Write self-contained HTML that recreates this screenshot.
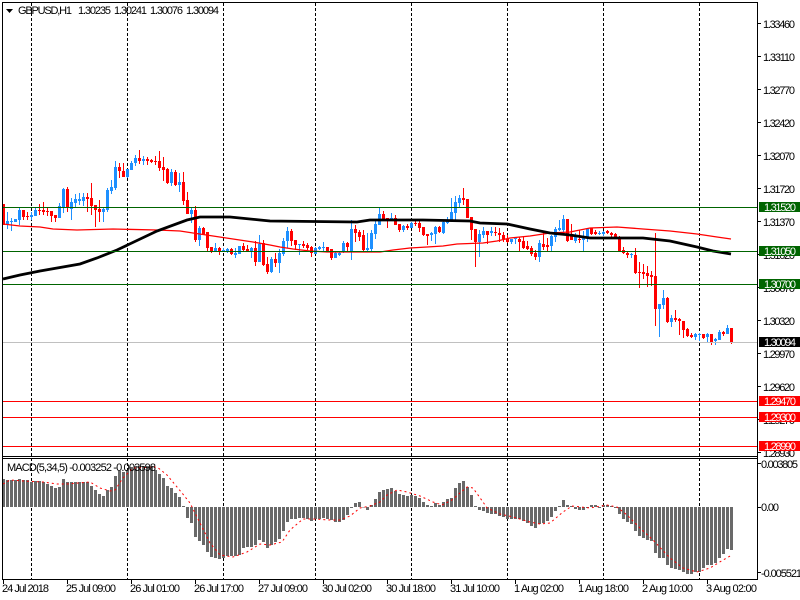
<!DOCTYPE html>
<html>
<head>
<meta charset="utf-8">
<style>
html,body{margin:0;padding:0;background:#fff;width:800px;height:600px;overflow:hidden}
svg{display:block}
text{font-family:"Liberation Sans",sans-serif;font-size:11px;fill:#000}
.c{shape-rendering:crispEdges;fill:none}
</style>
</head>
<body>
<svg width="800" height="600" viewBox="0 0 800 600" xmlns="http://www.w3.org/2000/svg">
<rect width="800" height="600" fill="#fff"/>

<!-- vertical grid -->
<path class="c" stroke="#000" stroke-dasharray="3 2" d="M31.5 3V579M127.5 3V579M223.5 3V579M315.5 3V579M411.5 3V579M507.5 3V579M603.5 3V579M699.5 3V579"/>

<!-- blue wicks -->
<path class="c" stroke="#1e90ff" d="M7.5 212V229M11.5 218V231M15.5 219V222M19.5 208V225M31.5 212V220M35.5 208V216M59.5 203V218M63.5 188V213M71.5 198V220M75.5 194V208M79.5 193V205M83.5 193V206M103.5 208V222M107.5 188V212M111.5 180V194M115.5 161V190M127.5 169V178M131.5 161V170M135.5 155V166M143.5 156V165M171.5 169V186M179.5 173V192M191.5 208V223M199.5 226V246M215.5 243V252M223.5 248V252M227.5 248V253M235.5 248V258M239.5 246V254M251.5 247V258M259.5 235V262M271.5 257V273M279.5 249V273M283.5 238V256M287.5 227V248M299.5 244V255M315.5 247V254M319.5 246V250M323.5 242V251M335.5 252V258M339.5 251V256M343.5 241V253M351.5 220V260M367.5 233V251M371.5 230V251M375.5 220V239M379.5 208V225M391.5 213V221M403.5 225V232M411.5 222V228M431.5 232V241M435.5 226V244M443.5 220V234M447.5 217V224M451.5 198V222M455.5 196V221M459.5 195V207M479.5 230V257M483.5 227V238M491.5 227V236M511.5 239V244M515.5 238V244M539.5 240V262M551.5 235V251M555.5 227V242M559.5 220V231M563.5 215V232M575.5 233V243M583.5 231V252M587.5 228V242M599.5 231V235M603.5 231V236M631.5 253V258M659.5 304V337M663.5 290V309M671.5 315V327M695.5 333V340M699.5 333V341M707.5 333V342M715.5 338V345M719.5 330V340M727.5 325V334"/>
<!-- blue bodies -->
<path class="c" stroke="#1e90ff" stroke-width="3" d="M7.5 221V225M11.5 221V222M15.5 219V222M19.5 210V220M31.5 215V217M35.5 210V216M59.5 206V218M63.5 189V208M71.5 202V209M75.5 199V203M79.5 199V201M83.5 197V201M103.5 209V212M107.5 190V210M111.5 187V191M115.5 167V188M127.5 169V177M131.5 163V170M135.5 158V163M143.5 159V161M171.5 172V183M179.5 182V185M191.5 210V214M199.5 228V240M215.5 248V251M223.5 250V251M227.5 249V251M235.5 253V255M239.5 246V254M251.5 248V251M259.5 244V262M271.5 259V272M279.5 253V263M283.5 241V254M287.5 231V241M299.5 244V245M315.5 248V254M319.5 247V249M323.5 247V248M335.5 253V258M339.5 253V255M343.5 243V252M351.5 229V251M367.5 248V250M371.5 233V249M375.5 224V234M379.5 214V225M391.5 218V220M403.5 226V230M411.5 223V228M431.5 233V235M435.5 227V234M443.5 222V233M447.5 221V223M451.5 212V220M455.5 202V213M459.5 198V203M479.5 234V242M483.5 231V235M491.5 231V233M511.5 239V242M515.5 238V239M539.5 243V257M551.5 236V246M555.5 229V237M559.5 228V230M563.5 219V230M575.5 237V241M583.5 236V240M587.5 229V237M599.5 233V234M603.5 232V234M631.5 254V255M659.5 304V309M663.5 298V305M671.5 318V322M695.5 334V337M699.5 334V335M707.5 334V337M715.5 339V341M719.5 332V340M727.5 328V334"/>
<!-- red wicks -->
<path class="c" stroke="#ff0000" d="M3.5 204V225M23.5 210V220M27.5 212V220M39.5 204V215M43.5 202V215M47.5 208V216M51.5 211V222M55.5 215V222M67.5 187V212M87.5 193V212M91.5 183V215M95.5 205V227M99.5 200V222M119.5 163V178M123.5 163V177M139.5 150V164M147.5 157V165M151.5 159V163M155.5 156V165M159.5 151V171M163.5 157V181M167.5 168V184M175.5 170V186M183.5 172V205M187.5 192V214M195.5 206V242M203.5 227V235M207.5 232V251M211.5 247V253M219.5 247V255M231.5 248V255M243.5 243V252M247.5 245V251M255.5 241V266M263.5 240V266M267.5 257V274M275.5 253V267M291.5 229V246M295.5 240V250M303.5 241V248M307.5 243V250M311.5 246V257M327.5 247V252M331.5 249V260M347.5 242V251M355.5 225V242M359.5 230V241M363.5 230V251M383.5 211V220M387.5 218V228M395.5 215V225M399.5 224V232M407.5 224V230M415.5 221V226M419.5 220V232M423.5 227V236M427.5 234V245M439.5 226V233M463.5 188V205M467.5 199V218M471.5 217V240M475.5 229V267M487.5 231V244M495.5 227V236M499.5 228V242M503.5 232V242M507.5 235V243M519.5 237V251M523.5 237V249M527.5 241V250M531.5 246V256M535.5 250V260M543.5 232V250M547.5 238V251M567.5 219V242M571.5 224V240M579.5 230V243M591.5 228V235M595.5 230V235M607.5 230V234M611.5 232V239M615.5 233V238M619.5 236V251M623.5 247V254M627.5 251V258M635.5 248V274M639.5 262V288M643.5 264V279M647.5 266V287M651.5 271V286M655.5 233V326M667.5 297V323M675.5 310V322M679.5 318V335M683.5 321V338M687.5 328V337M691.5 333V338M703.5 334V339M711.5 334V345M723.5 331V336M731.5 328V344"/>
<!-- red bodies -->
<path class="c" stroke="#ff0000" stroke-width="3" d="M3.5 204V225M23.5 210V217M27.5 216V217M39.5 210V211M43.5 210V212M47.5 211V212M51.5 211V216M55.5 215V218M67.5 189V208M87.5 197V199M91.5 198V206M95.5 205V210M99.5 209V212M119.5 167V171M123.5 171V177M139.5 158V161M147.5 159V161M151.5 160V162M155.5 161V162M159.5 161V168M163.5 167V170M167.5 169V183M175.5 172V185M183.5 182V201M187.5 200V214M195.5 210V240M203.5 228V235M207.5 232V248M211.5 247V251M219.5 248V251M231.5 249V254M243.5 246V250M247.5 249V251M255.5 248V262M263.5 243V265M267.5 264V272M275.5 259V263M291.5 231V241M295.5 240V245M303.5 244V246M307.5 245V248M311.5 247V253M327.5 247V252M331.5 249V258M347.5 243V247M355.5 229V233M359.5 232V237M363.5 235V250M383.5 214V219M387.5 218V220M395.5 218V225M399.5 224V230M407.5 226V228M415.5 223V224M419.5 223V228M423.5 227V235M427.5 234V236M439.5 227V232M463.5 198V200M467.5 199V218M471.5 217V230M475.5 229V242M487.5 231V235M495.5 232V233M499.5 233V235M503.5 235V239M507.5 239V242M519.5 239V242M523.5 241V248M527.5 246V249M531.5 248V254M535.5 253V257M543.5 244V247M547.5 245V247M567.5 219V241M571.5 234V240M579.5 239V240M591.5 228V234M595.5 232V234M607.5 231V233M611.5 233V235M615.5 234V237M619.5 237V251M623.5 250V253M627.5 253V255M635.5 255V273M639.5 272V273M643.5 272V274M647.5 273V276M651.5 275V277M655.5 276V309M667.5 298V322M675.5 318V320M679.5 319V321M683.5 321V330M687.5 329V336M691.5 335V337M703.5 334V338M711.5 334V342M723.5 332V334M731.5 328V342"/>

<!-- moving averages -->
<polyline fill="none" stroke="#ff0000" stroke-width="1.3" points="3,224 20,226 40,227 53,229 77,230 113,229 157,230 180,231 193,233 213,236 233,239 253,242 270,245 280,247 293,249 310,251 327,252 380,252 393,250 410,248 427,247 443,246 457,244 483,243 497,241 510,238 530,236 550,233 570,232 590,228 617,227 643,229 670,231 697,234 717,237 731,239"/>
<polyline fill="none" stroke="#000" stroke-width="2.8" points="3,279 20,275 40,271 80,264 97,258 117,250 157,231 187,220 200,217 230,217 260,220 270,221 357,222 370,220 423,220 470,221 480,223 507,224 530,229 550,233 570,235 590,238 643,238 670,241 697,247 713,251 731,254"/>

<!-- horizontal objects -->
<g class="c">
<path stroke="#006400" d="M3 207.5H757M3 251.5H757M3 284.5H757"/>
<path stroke="#c0c0c0" d="M3 342.5H757"/>
<path stroke="#ff0000" d="M3 401.5H757M3 417.5H757M3 446.5H757"/>
</g>

<!-- MACD histogram -->
<path class="c" stroke="#696969" stroke-width="3" d="M3.5 507V479M7.5 507V480M11.5 507V480M15.5 507V480M19.5 507V479M23.5 507V480M27.5 507V480M31.5 507V482M35.5 507V481M39.5 507V481M43.5 507V482M47.5 507V484M51.5 507V486M55.5 507V488M59.5 507V487M63.5 507V479M67.5 507V482M71.5 507V482M75.5 507V482M79.5 507V482M83.5 507V482M87.5 507V482M91.5 507V486M95.5 507V490M99.5 507V494M103.5 507V496M107.5 507V490M111.5 507V487M115.5 507V476M119.5 507V471M123.5 507V472M127.5 507V470M131.5 507V467M135.5 507V466M139.5 507V466M143.5 507V466M147.5 507V466M151.5 507V466M155.5 507V470M159.5 507V474M163.5 507V478M167.5 507V486M171.5 507V488M175.5 507V493M179.5 507V497M183.5 507V506M187.5 507V518M191.5 507V523M195.5 507V537M199.5 507V541M203.5 507V545M207.5 507V552M211.5 507V557M215.5 507V558M219.5 507V559M223.5 507V558M227.5 507V556M231.5 507V556M235.5 507V556M239.5 507V555M243.5 507V548M247.5 507V547M251.5 507V547M255.5 507V545M259.5 507V540M263.5 507V542M267.5 507V548M271.5 507V545M275.5 507V542M279.5 507V539M283.5 507V531M287.5 507V522M291.5 507V519M295.5 507V519M299.5 507V518M303.5 507V518M307.5 507V519M311.5 507V521M315.5 507V519M319.5 507V519M323.5 507V518M327.5 507V519M331.5 507V520M335.5 507V522M339.5 507V522M343.5 507V520M347.5 507V515M351.5 507V508M355.5 507V503M359.5 507V502M363.5 507V507.5M367.5 507V510M371.5 507V505M375.5 507V499M379.5 507V492M383.5 507V490M387.5 507V489M391.5 507V488M395.5 507V491M399.5 507V494M403.5 507V495M407.5 507V496M411.5 507V495M415.5 507V496M419.5 507V498M423.5 507V502M427.5 507V505M431.5 507V506M435.5 507V503M439.5 507V505M443.5 507V502M447.5 507V499M451.5 507V498M455.5 507V488M459.5 507V483M463.5 507V481M467.5 507V487M471.5 507V495M475.5 507V506M479.5 507V510M483.5 507V511M487.5 507V513M491.5 507V514M495.5 507V514M499.5 507V516M503.5 507V517M507.5 507V519M511.5 507V519M515.5 507V519M519.5 507V519M523.5 507V521M527.5 507V523M531.5 507V526M535.5 507V528M539.5 507V524M543.5 507V523M547.5 507V521M551.5 507V517M555.5 507V511M559.5 507V506M563.5 507V500M567.5 507V505M571.5 507V506M575.5 507V509M579.5 507V510M583.5 507V510M587.5 507V508M591.5 507V505M595.5 507V505M599.5 507V508M603.5 507V505M607.5 507V505M611.5 507V506M615.5 507V508M619.5 507V514M623.5 507V519M627.5 507V522M631.5 507V524M635.5 507V531M639.5 507V536M643.5 507V538M647.5 507V540M651.5 507V541M655.5 507V553M659.5 507V558M663.5 507V558M667.5 507V565M671.5 507V568M675.5 507V569M679.5 507V570M683.5 507V572M687.5 507V574M691.5 507V574M695.5 507V572M699.5 507V572M703.5 507V568M707.5 507V565M711.5 507V565M715.5 507V563M719.5 507V558M723.5 507V554M727.5 507V549M731.5 507V550"/>
<!-- MACD signal -->
<polyline fill="none" stroke="#ff0000" stroke-width="1" stroke-dasharray="2 3" points="3,484 10,480 23,481 43,482 57,484 67,484 90,482 100,488 110,491 115,490 123,478 133,468 157,467 167,475 182,493 190,503 200,523 210,543 220,555 233,557 247,552 260,544 270,545 282,542 290,530 303,519 313,519 330,520 340,520 350,516 360,508 370,506 380,502 387,495 397,490 407,492 420,496 433,502 442,505 452,500 460,493 467,487 473,488 483,502 487,508 500,514 513,517 530,522 540,524 550,523 563,512 572,506 590,508 607,505 617,507 627,515 640,528 653,540 670,558 683,568 697,572 710,568 723,560 732,555"/>

<!-- frames -->
<g class="c" stroke="#000">
<path d="M2.5 2.5H757.5V579.5H2.5Z"/>
<path d="M3 456.5H758M3 458.5H758"/>
<!-- price ticks -->
<path d="M758 23.5H761M758 56.5H761M758 89.5H761M758 122.5H761M758 155.5H761M758 188.5H761M758 221.5H761M758 254.5H761M758 287.5H761M758 320.5H761M758 353.5H761M758 386.5H761M758 419.5H761M758 452.5H761M758 463.5H761M758 507.5H761M758 572.5H761"/>
<!-- time ticks -->
<path d="M3.5 580V584M67.5 580V584M131.5 580V584M195.5 580V584M259.5 580V584M323.5 580V584M387.5 580V584M451.5 580V584M515.5 580V584M579.5 580V584M643.5 580V584M707.5 580V584"/>
</g>

<!-- title -->
<polygon points="6,9 13,9 9.5,13" fill="#000"/>
<text x="18" y="14" textLength="54" lengthAdjust="spacing">GBPUSD,H1</text>
<text x="78" y="14" textLength="33" lengthAdjust="spacing">1.30235</text>
<text x="114" y="14" textLength="33" lengthAdjust="spacing">1.30241</text>
<text x="150" y="14" textLength="33" lengthAdjust="spacing">1.30076</text>
<text x="186" y="14" textLength="33" lengthAdjust="spacing">1.30094</text>
<text x="7" y="471" textLength="149" lengthAdjust="spacing">MACD(5,34,5) -0.003252 -0.003598</text>

<!-- price axis -->
<text x="763" y="28" textLength="32" lengthAdjust="spacing">1.33460</text>
<text x="763" y="61" textLength="32" lengthAdjust="spacing">1.33110</text>
<text x="763" y="94" textLength="32" lengthAdjust="spacing">1.32770</text>
<text x="763" y="127" textLength="32" lengthAdjust="spacing">1.32420</text>
<text x="763" y="160" textLength="32" lengthAdjust="spacing">1.32070</text>
<text x="763" y="193" textLength="32" lengthAdjust="spacing">1.31720</text>
<text x="763" y="226" textLength="32" lengthAdjust="spacing">1.31370</text>
<text x="763" y="259" textLength="32" lengthAdjust="spacing">1.31020</text>
<text x="763" y="292" textLength="32" lengthAdjust="spacing">1.30670</text>
<text x="763" y="325" textLength="32" lengthAdjust="spacing">1.30320</text>
<text x="763" y="358" textLength="32" lengthAdjust="spacing">1.29970</text>
<text x="763" y="391" textLength="32" lengthAdjust="spacing">1.29620</text>
<text x="763" y="424" textLength="32" lengthAdjust="spacing">1.29270</text>
<text x="763" y="457" textLength="32" lengthAdjust="spacing">1.28930</text>

<!-- price boxes -->
<g class="c">
<rect x="759" y="202" width="41" height="10" fill="#006400"/>
<rect x="759" y="246" width="41" height="10" fill="#006400"/>
<rect x="759" y="279" width="41" height="10" fill="#006400"/>
<rect x="759" y="337" width="41" height="10" fill="#000"/>
<rect x="759" y="396" width="41" height="10" fill="#ff0000"/>
<rect x="759" y="412" width="41" height="10" fill="#ff0000"/>
<rect x="759" y="441" width="41" height="10" fill="#ff0000"/>
</g>
<text x="764" y="211" textLength="32" lengthAdjust="spacing" style="fill:#fff">1.31520</text>
<text x="764" y="255" textLength="32" lengthAdjust="spacing" style="fill:#fff">1.31050</text>
<text x="764" y="288" textLength="32" lengthAdjust="spacing" style="fill:#fff">1.30700</text>
<text x="764" y="346" textLength="32" lengthAdjust="spacing" style="fill:#fff">1.30094</text>
<text x="764" y="405" textLength="32" lengthAdjust="spacing" style="fill:#fff">1.29470</text>
<text x="764" y="421" textLength="32" lengthAdjust="spacing" style="fill:#fff">1.29300</text>
<text x="764" y="450" textLength="32" lengthAdjust="spacing" style="fill:#fff">1.28990</text>

<!-- MACD axis -->
<text x="761" y="468" textLength="37" lengthAdjust="spacing">0.003805</text>
<text x="761" y="511" textLength="18" lengthAdjust="spacing">0.00</text>
<text x="761" y="577" textLength="41" lengthAdjust="spacing">-0.005521</text>

<!-- time axis -->
<text x="2" y="592" textLength="47" lengthAdjust="spacing">24 Jul 2018</text>
<text x="66" y="592" textLength="50" lengthAdjust="spacing">25 Jul 09:00</text>
<text x="130" y="592" textLength="50" lengthAdjust="spacing">26 Jul 01:00</text>
<text x="194" y="592" textLength="50" lengthAdjust="spacing">26 Jul 17:00</text>
<text x="258" y="592" textLength="50" lengthAdjust="spacing">27 Jul 09:00</text>
<text x="322" y="592" textLength="50" lengthAdjust="spacing">30 Jul 02:00</text>
<text x="386" y="592" textLength="50" lengthAdjust="spacing">30 Jul 18:00</text>
<text x="450" y="592" textLength="50" lengthAdjust="spacing">31 Jul 10:00</text>
<text x="514" y="592" textLength="50" lengthAdjust="spacing">1 Aug 02:00</text>
<text x="578" y="592" textLength="51" lengthAdjust="spacing">1 Aug 18:00</text>
<text x="642" y="592" textLength="51" lengthAdjust="spacing">2 Aug 10:00</text>
<text x="706" y="592" textLength="51" lengthAdjust="spacing">3 Aug 02:00</text>
</svg>
</body>
</html>
